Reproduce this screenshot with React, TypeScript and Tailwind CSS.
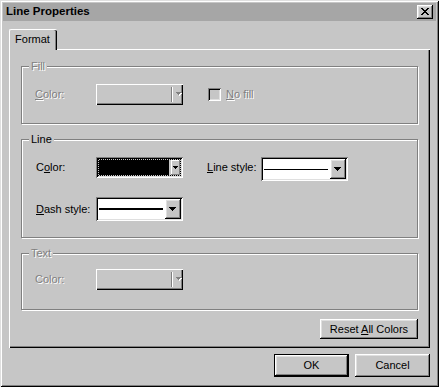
import React from "react";

const raised =
  "shadow-[inset_-1px_-1px_0_#000,inset_1px_1px_0_#fff,inset_-2px_-2px_0_#808080,inset_2px_2px_0_#dfdfdf]";
const sunken =
  "shadow-[inset_1px_1px_0_#808080,inset_-1px_-1px_0_#fff,inset_2px_2px_0_#000,inset_-2px_-2px_0_#dfdfdf]";
const disabledText = "text-[#808080] [text-shadow:1px_1px_0_#fff]";

function Tri({ w = 7, color = "#000", shadow = false }: { w?: number; color?: string; shadow?: boolean }) {
  const rows = Math.ceil(w / 2);
  const rects = [];
  for (let i = 0; i < rows; i++) {
    rects.push({ x: i, y: i, w: w - 2 * i });
  }
  return (
    <svg width={w + 1} height={rows + 1} shapeRendering="crispEdges">
      {shadow &&
        rects.map((r, i) => <rect key={"s" + i} x={r.x + 1} y={r.y + 1} width={r.w} height={1} fill="#fff" />)}
      {rects.map((r, i) => (
        <rect key={i} x={r.x} y={r.y} width={r.w} height={1} fill={color} />
      ))}
    </svg>
  );
}

function DisabledCombo() {
  return (
    <div className="w-[87px] h-[21px] flex bg-[#c6c6c6] shadow-[inset_1px_1px_0_#fff,inset_-1px_-1px_0_#000,inset_-2px_-2px_0_#808080]">
      <div className="flex-1" />
      <div className="w-[1px] bg-[#808080] my-[3px]" />
      <div className="w-[1px] bg-white my-[3px]" />
      <div className="w-[10px] flex items-center pl-[3px] pb-[1px]">
        <Tri w={5} color="#808080" shadow />
      </div>
    </div>
  );
}

function ColorCombo() {
  return (
    <div className={`w-[87px] h-[21px] p-[2px] bg-[#c6c6c6] ${sunken}`}>
      <div className="h-full flex border border-dotted border-black bg-[#c6c6c6]">
        <div className="flex-1 bg-black" />
        <div className="w-[2px]" />
        <div className="w-[9px] shadow-[inset_-1px_-1px_0_#808080,inset_1px_1px_0_#fff] flex items-center justify-center">
          <Tri w={5} />
        </div>
      </div>
    </div>
  );
}

function LineCombo({ thick }: { thick: boolean }) {
  return (
    <div className={`w-[87px] h-[24px] p-[2px] bg-white flex ${sunken}`}>
      <div className="flex-1 flex items-center pl-[1px] pr-[2px]">
        <div className={`w-full bg-black ${thick ? "h-[2px]" : "h-[1px]"}`} />
      </div>
      <div className={`w-[16px] h-full bg-[#c6c6c6] flex items-center justify-center ${raised}`}>
        <Tri w={7} />
      </div>
    </div>
  );
}

function Group({
  label,
  disabled,
  className,
  children,
}: {
  label: string;
  disabled?: boolean;
  className: string;
  children: React.ReactNode;
}) {
  return (
    <div
      className={`relative w-[397px] border border-[#808080] shadow-[1px_1px_0_#fff,inset_1px_1px_0_#fff] ${className}`}
    >
      <div
        className={`absolute left-[7px] top-[-7px] px-[2px] leading-[13px] bg-[#c6c6c6] ${disabled ? disabledText : ""}`}
      >
        {label}
      </div>
      {children}
    </div>
  );
}

export default function App() {
  return (
    <div className="w-[439px] h-[387px] bg-[#c6c6c6] p-[3px] flex flex-col font-['Liberation_Sans',Arial,sans-serif] text-[11px] text-black shadow-[inset_1px_1px_0_#dfdfdf,inset_-1px_-1px_0_#000,inset_2px_2px_0_#fff,inset_-2px_-2px_0_#808080]">
      {/* Title bar */}
      <div className="h-[18px] bg-[#a6a6a6] flex items-center justify-between pl-[3px] pr-[3px]">
        <span className="font-bold text-[11.5px] leading-none">Line Properties</span>
        <div className={`w-[16px] h-[14px] bg-[#c6c6c6] flex items-center justify-center pb-[1px] ${raised}`}>
          <svg width="8" height="7" shapeRendering="crispEdges">
            <rect x="0" y="0" width="2" height="1" />
            <rect x="6" y="0" width="2" height="1" />
            <rect x="1" y="1" width="2" height="1" />
            <rect x="5" y="1" width="2" height="1" />
            <rect x="2" y="2" width="4" height="1" />
            <rect x="3" y="3" width="2" height="1" />
            <rect x="2" y="4" width="4" height="1" />
            <rect x="1" y="5" width="2" height="1" />
            <rect x="5" y="5" width="2" height="1" />
            <rect x="0" y="6" width="2" height="1" />
            <rect x="6" y="6" width="2" height="1" />
          </svg>
        </div>
      </div>

      {/* Body */}
      <div className="flex flex-col px-[6px] pt-[8px]">
        {/* Tab */}
        <div className="flex">
          <div className="relative z-10 -mb-[1px] w-[48px] h-[21px] bg-[#c6c6c6] rounded-t-[2px] border-l border-t border-white shadow-[inset_-1px_0_0_#000,inset_-2px_0_0_#808080] flex items-center justify-center pr-[2px] pb-[1px]">
            Format
          </div>
        </div>

        {/* Panel */}
        <div className="h-[299px] flex flex-col pl-[12px] pr-[12px] pt-[17px] shadow-[inset_1px_1px_0_#fff,inset_-1px_-1px_0_#000,inset_-2px_-2px_0_#808080]">
          {/* Fill */}
          <Group label="Fill" disabled className="h-[58px]">
            <div className="flex items-center pl-[13px] pt-[17px]">
              <span className={`w-[61px] ${disabledText}`}>
                <u className="underline-offset-[1px]">C</u>olor:
              </span>
              <DisabledCombo />
              <div className={`ml-[25px] w-[13px] h-[13px] bg-[#c6c6c6] ${sunken}`} />
              <span className={`ml-[5px] ${disabledText}`}>
                <u className="underline-offset-[1px]">N</u>o fill
              </span>
            </div>
          </Group>

          {/* Line */}
          <Group label="Line" className="h-[99px] mt-[15px]">
            <div className="flex flex-col pl-[14px] pt-[17px] gap-[16px]">
              <div className="flex items-start">
                <div className="flex items-center h-[21px]">
                  <span className="w-[60px]">
                    C<u className="underline-offset-[1px]">o</u>lor:
                  </span>
                  <ColorCombo />
                </div>
                <div className="flex items-center h-[21px] ml-[24px] w-[54px]">
                  <span>
                    <u className="underline-offset-[1px]">L</u>ine style:
                  </span>
                </div>
                <LineCombo thick={false} />
              </div>
              <div className="flex items-center">
                <span className="w-[60px]">
                  <u className="underline-offset-[1px]">D</u>ash style:
                </span>
                <LineCombo thick />
              </div>
            </div>
          </Group>

          {/* Text */}
          <Group label="Text" disabled className="h-[57px] mt-[15px]">
            <div className="flex items-center pl-[13px] pt-[15px]">
              <span className={`w-[61px] ${disabledText}`}>Color:</span>
              <DisabledCombo />
            </div>
          </Group>

          <div className="flex justify-end mt-[9px]">
            <button className={`w-[98px] h-[20px] bg-[#c6c6c6] flex items-center justify-center ${raised}`}>
              <span>
                Reset <u className="underline-offset-[1px]">A</u>ll Colors
              </span>
            </button>
          </div>
        </div>

        {/* Bottom buttons */}
        <div className="flex justify-end gap-[6px] mt-[6px]">
          <button
            className={`w-[75px] h-[23px] bg-[#c6c6c6] border border-black flex items-center justify-center ${raised}`}
          >
            OK
          </button>
          <button className={`w-[75px] h-[23px] bg-[#c6c6c6] flex items-center justify-center ${raised}`}>
            Cancel
          </button>
        </div>
      </div>
    </div>
  );
}
